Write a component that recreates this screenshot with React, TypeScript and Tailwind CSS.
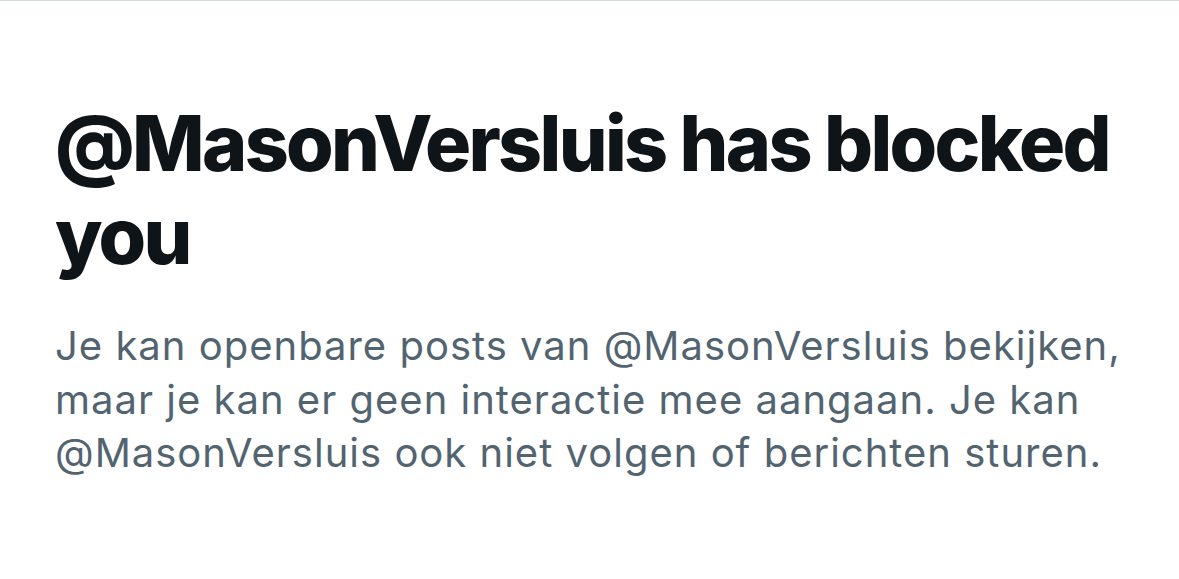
export default function App() {
  return (
    <main className="min-h-screen w-full bg-white border-t border-[#cfd9de]">
      <div className="px-[55px] pt-[96px]">
        <h1 className="font-['Inter','Liberation_Sans',sans-serif] text-[77px] leading-[93px] font-extrabold tracking-[-0.035em] text-[#0f1419]">
          @MasonVersluis has blocked you
        </h1>
        <p className="mt-[36px] font-['Inter','Liberation_Sans',sans-serif] text-[40px] leading-[53.5px] tracking-[0.025em] text-[#536471]">
          Je kan openbare posts van @MasonVersluis bekijken, maar je kan er geen interactie mee aangaan. Je kan
          @MasonVersluis ook niet volgen of berichten sturen.
        </p>
      </div>
    </main>
  )
}
